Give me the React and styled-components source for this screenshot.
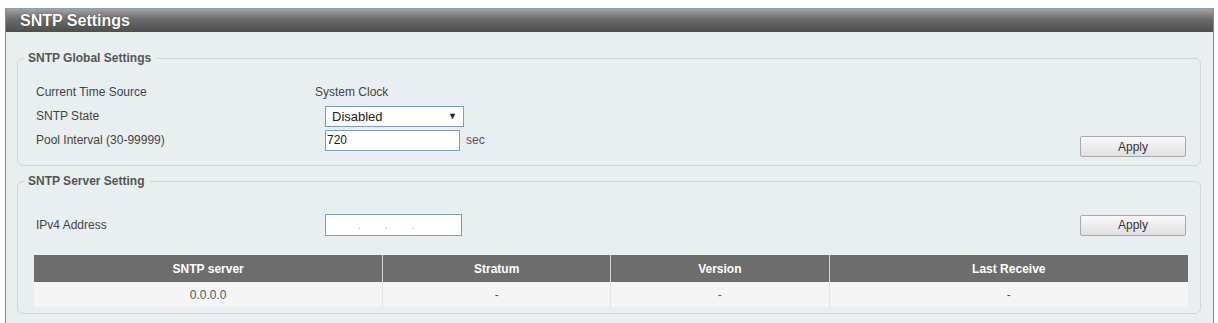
import React from 'react'
import styled, { createGlobalStyle } from 'styled-components'

const Global = createGlobalStyle`
    body {
        margin: 0;
        background: #ffffff;
        font-family: 'Liberation Sans', Arial, sans-serif;
    }
`;

const Page = styled.div`
    padding: 8px 4px 0 5px;
    height: 323px;
    box-sizing: border-box;
`;

const Panel = styled.div`
    height: 100%;
    border-left: 1px solid #6f8ea8;
    border-right: 1px solid #6f8ea8;
    border-top: 1px solid #8aa0b2;
    background: #e9eef0;
    display: flex;
    flex-direction: column;
`;

const TitleBar = styled.div`
    height: 23px;
    background: linear-gradient(#a3a3a3 0%, #6a6a6a 45%, #4e4e4e 100%);
    color: #ffffff;
    font-weight: bold;
    font-size: 16px;
    padding-left: 14px;
    display: flex;
    align-items: center;
    text-shadow: 0 0 1px #222;
`;

const Body = styled.div`
    padding: 19px 12px 0 11px;
    display: flex;
    flex-direction: column;
    gap: 8px;
`;

const Fieldset = styled.fieldset`
    margin: 0;
    border: 1px solid #cfd7db;
    border-radius: 6px;
    padding: ${p => p.$pad};
`;

const Legend = styled.legend`
    font-size: 12px;
    font-weight: bold;
    color: #555555;
    padding: 0 6px 0 4px;
    margin-left: -12px;
`;

const Row = styled.div`
    display: flex;
    align-items: center;
    height: ${p => p.$h || 24}px;
    font-size: 12px;
    color: #444444;
`;

const Label = styled.div`
    width: 279px;
`;

const Value = styled.div`
    display: flex;
    align-items: center;
    gap: 6px;
    flex: 1;
`;

const Select = styled.div`
    width: 125px;
    height: 19px;
    margin-left: 10px;
    border: 1px solid #7f9db9;
    background: #ffffff;
    display: flex;
    align-items: center;
    justify-content: space-between;
    padding: 0 6px;
    font-size: 13px;
    color: #222;
`;

const Arrow = styled.span`
    font-size: 9px;
`;

const Input = styled.div`
    width: ${p => p.$w}px;
    height: ${p => p.$ht || 19}px;
    margin-left: 10px;
    border: 1px solid #7f9db9;
    background: #ffffff;
    display: flex;
    align-items: center;
    padding-left: 1px;
    font-size: 12px;
    color: #222;
`;

const IpDots = styled.div`
    display: flex;
    gap: 24px;
    padding-left: 31px;
    color: #999;
    font-size: 10px;
`;

const Unit = styled.span`
    color: #555;
`;

const Button = styled.button`
    width: 106px;
    height: 21px;
    border: 1px solid #a9a9a9;
    border-radius: 2px;
    background: linear-gradient(#fafafa, #e0e0e0);
    font-family: 'Liberation Sans', Arial, sans-serif;
    font-size: 12px;
    color: #333;
    margin-right: 2px;
    margin-top: ${p => p.$offset || 0}px;
`;

const Table = styled.table`
    width: calc(100% + 2px);
    margin-left: -2px;
    border-collapse: collapse;
    margin-top: 17px;
    font-size: 12px;
`;

const Th = styled.th`
    background: #6d6d6d;
    color: #ffffff;
    font-weight: bold;
    height: 27px;
    padding: 0;
    border-left: 1px solid #d6d6d6;
    &:first-child { border-left: none; }
`;

const Td = styled.td`
    background: #f5f5f5;
    color: #555;
    text-align: center;
    height: 25px;
    padding: 0;
    border-left: 1px solid #e4e4e4;
    &:first-child { border-left: none; }
`;

const columns = [
    { name: 'SNTP server', width: 349, value: '0.0.0.0' },
    { name: 'Stratum', width: 227, value: '-' },
    { name: 'Version', width: 218, value: '-' },
    { name: 'Last Receive', width: 359, value: '-' },
];

export default function App() {
    return (
        <Page>
            <Global />
            <Panel>
                <TitleBar>SNTP Settings</TitleBar>
                <Body>
                    <Fieldset $pad="15px 12px 13px 18px">
                        <Legend>SNTP Global Settings</Legend>
                        <Row>
                            <Label>Current Time Source</Label>
                            <Value>System Clock</Value>
                        </Row>
                        <Row>
                            <Label>SNTP State</Label>
                            <Value>
                                <Select>Disabled<Arrow>▼</Arrow></Select>
                            </Value>
                        </Row>
                        <Row>
                            <Label>Pool Interval (30-99999)</Label>
                            <Value>
                                <Input $w={132}>720</Input>
                                <Unit>sec</Unit>
                            </Value>
                            <Button $offset={13}>Apply</Button>
                        </Row>
                    </Fieldset>
                    <Fieldset $pad="24px 12px 6px 18px">
                        <Legend>SNTP Server Setting</Legend>
                        <Row $h={26}>
                            <Label>IPv4 Address</Label>
                            <Value>
                                <Input $w={134} $ht={20}>
                                    <IpDots><span>.</span><span>.</span><span>.</span></IpDots>
                                </Input>
                            </Value>
                            <Button>Apply</Button>
                        </Row>
                        <Table>
                            <thead>
                                <tr>
                                    {columns.map(c => <Th key={c.name} style={{ width: c.width }}>{c.name}</Th>)}
                                </tr>
                            </thead>
                            <tbody>
                                <tr>
                                    {columns.map(c => <Td key={c.name}>{c.value}</Td>)}
                                </tr>
                            </tbody>
                        </Table>
                    </Fieldset>
                </Body>
            </Panel>
        </Page>
    )
}
